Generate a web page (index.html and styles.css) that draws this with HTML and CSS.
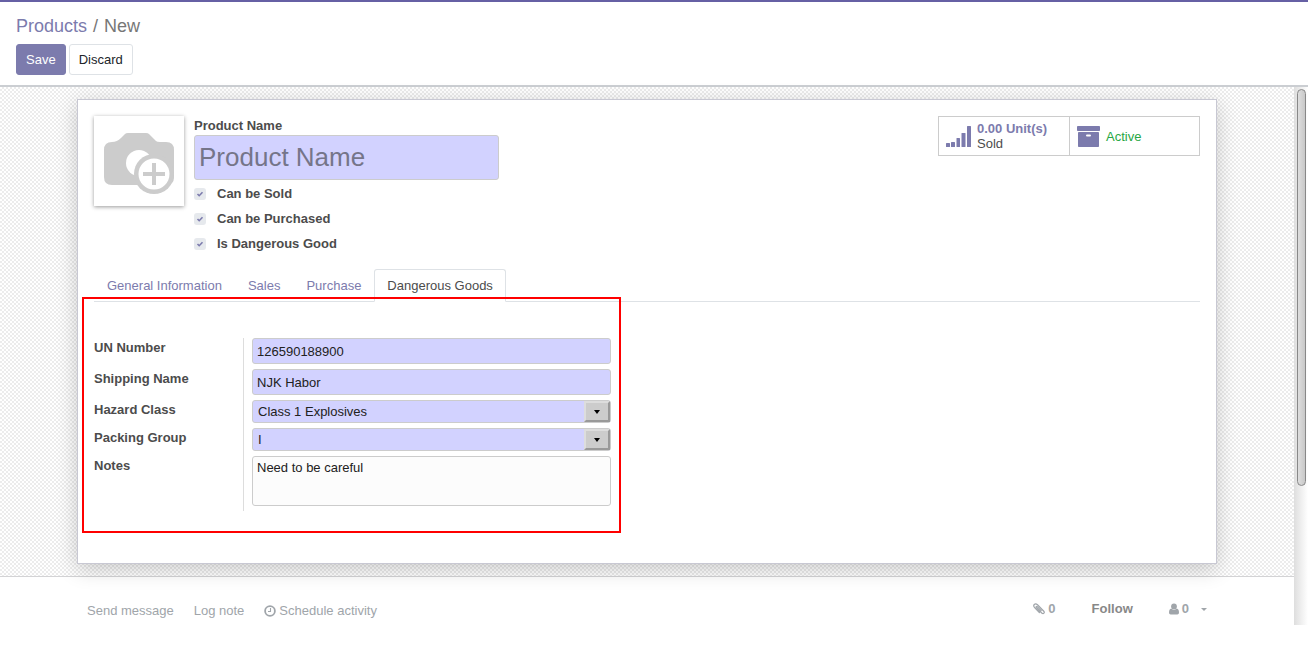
FILE: index.html
```html
<!DOCTYPE html>
<html lang="en">
<head>
<meta charset="utf-8">
<title>Products / New</title>
<link rel="stylesheet" href="styles.css">
</head>
<body>
<header class="control-panel">
  <nav class="breadcrumb" aria-label="Breadcrumb">
    <a href="#">Products</a><span class="muted">/</span><span class="current">New</span>
  </nav>
  <div class="actions">
    <button class="btn btn-primary" type="button">Save</button>
    <button class="btn btn-secondary" type="button">Discard</button>
  </div>
</header>

<div class="content">
  <main class="view">
    <div class="sheet-bg">
      <form class="sheet">
        <div class="sheet-top">
          <button class="avatar" type="button" aria-label="Upload image">
            <svg viewBox="0 0 90 90" width="90" height="90">
              <path fill="#ccc" d="M18 26q5 0 9-4l4-4q1-1 3-1h18q2 0 3 1l7 7q1 1 4 1h6q8 0 8 8v27q0 8-8 8H18q-8 0-8-8V34q0-8 8-8z"/>
              <circle cx="45" cy="47" r="13" fill="#fff"/>
              <circle cx="60" cy="58" r="20" fill="#ccc"/>
              <circle cx="60" cy="58" r="15.5" fill="#fff"/>
              <path d="M49 58h22M60 47v22" stroke="#ccc" stroke-width="4"/>
            </svg>
          </button>
          <div class="title-block">
            <label class="field-label" for="name">Product Name</label>
            <input class="name-input" id="name" type="text" placeholder="Product Name">
            <div class="checks">
              <label class="check"><input type="checkbox" checked>Can be Sold</label>
              <label class="check"><input type="checkbox" checked>Can be Purchased</label>
              <label class="check"><input type="checkbox" checked>Is Dangerous Good</label>
            </div>
          </div>
          <div class="stats">
            <button class="stat" type="button">
              <svg viewBox="0 0 25 21" width="25" height="21" fill="#7c7bad">
                <rect x="0" y="17" width="4" height="4" rx=".5"/><rect x="5" y="16" width="4" height="5" rx=".5"/><rect x="10.500" y="12" width="3.500" height="9" rx=".5"/><rect x="15.500" y="7" width="4" height="14" rx=".5"/><rect x="21" y="0" width="4" height="21" rx=".5"/>
              </svg>
              <span><strong>0.00 Unit(s)</strong><br>Sold</span>
            </button>
            <button class="stat" type="button">
              <svg viewBox="0 0 23 21" width="23" height="21">
                <rect width="23" height="5" rx=".8" fill="#7c7bad"/><rect x="1" y="6" width="21" height="15" rx=".8" fill="#7c7bad"/><rect x="9" y="8.500" width="5" height="2" rx="1" fill="#fff"/>
              </svg>
              <span class="active-text">Active</span>
            </button>
          </div>
        </div>

        <nav class="tabs" aria-label="Product sections">
          <a class="tab" href="#">General Information</a>
          <a class="tab" href="#">Sales</a>
          <a class="tab" href="#">Purchase</a>
          <a class="tab tab-active" href="#">Dangerous Goods</a>
        </nav>

        <div class="panel">
          <div class="group">
            <div class="highlight"></div>
            <div class="rows">
              <label class="field-label" for="un">UN Number</label>
              <div class="cell"><input class="field" id="un" type="text" value="126590188900"></div>
              <label class="field-label" for="ship">Shipping Name</label>
              <div class="cell"><input class="field" id="ship" type="text" value="NJK Habor"></div>
              <label class="field-label" for="hazard">Hazard Class</label>
              <div class="cell"><div class="select-box"><select id="hazard"><option>Class 1 Explosives</option></select><span class="arrow"></span></div></div>
              <label class="field-label" for="packing">Packing Group</label>
              <div class="cell"><div class="select-box"><select id="packing"><option>I</option></select><span class="arrow"></span></div></div>
              <label class="field-label" for="notes">Notes</label>
              <div class="cell"><textarea class="notes" id="notes">Need to be careful</textarea></div>
            </div>
          </div>
        </div>
      </form>
    </div>

    <footer class="chatter">
      <div class="chatter-inner">
        <div class="chatter-left">
          <button class="link" type="button">Send message</button>
          <button class="link" type="button">Log note</button>
          <button class="link" type="button">
            <svg viewBox="0 0 12 12" width="12" height="12" fill="none" stroke="currentColor"><circle cx="6" cy="6" r="4.900" stroke-width="1.800"/><path d="M6.500 3v3.500H4" stroke-width="1.100"/></svg>
            Schedule activity
          </button>
        </div>
        <div class="chatter-right">
          <button class="link bold" type="button">
            <svg viewBox="0 0 12 12" width="12" height="12" fill="none" stroke="currentColor" stroke-width="1.200" stroke-linecap="round"><path d="M8.200 7.600 4.300 3.600Q3.600 3 3.200 3.500 2.800 4 3.400 4.600L8.700 10Q10 11.100 10.900 10.200 11.800 9.300 10.600 8L4.500 1.800Q2.700 .1 1.300 1.500 0 2.900 1.600 4.600L6.400 9.500"/></svg>
            0
          </button>
          <button class="link bold follow" type="button">Follow</button>
          <button class="link bold" type="button">
            <svg viewBox="0 0 10 12" width="10" height="12" fill="currentColor"><circle cx="5" cy="3.400" r="2.900"/><path d="M2.300 5.500Q5 8 7.700 5.500 10 6 10 9.800 10 11.500 8.300 11.500H1.700Q0 11.500 0 9.800 0 6 2.300 5.500z"/></svg>
            0<span class="caret"></span>
          </button>
        </div>
      </div>
    </footer>
  </main>
  <div class="scroll-track"><div class="scroll-thumb"></div></div>
</div>
</body>
</html>
```
FILE: styles.css
```css
* { box-sizing: border-box; }

body {
  margin: 0;
  padding-right: 2px;
  background: #fff;
  color: #4c4c4c;
  font: 13px/20px "Liberation Sans", Arial, sans-serif;
}

button, input, select, textarea { font: inherit; margin: 0; }
button { cursor: pointer; }
a { color: #7c7bad; text-decoration: none; }
svg { display: block; flex: none; }

.control-panel {
  display: flex;
  flex-direction: column;
  gap: 6px;
  padding: 12px 16px 10px;
  border-top: 2px solid #6660a4;
  border-bottom: 2px solid #cbced2;
}
.breadcrumb { display: flex; gap: 6px; font-size: 18px; line-height: 24px; }
.muted, .current { color: #777; }
.actions { display: flex; gap: 3px; }
.btn { height: 31px; padding: 0 9px; border: 1px solid #7c7bad; border-radius: 3px; }
.btn-primary { background: #7c7bad; color: #fff; }
.btn-secondary { background: #fff; border-color: #dee2e6; color: #212529; }

.content { display: flex; }
.view { flex: 1; min-width: 0; }

.sheet-bg {
  padding: 12px 16px;
  border-bottom: 1px solid #d3d3d5;
  background: repeating-conic-gradient(#ececec 0 25%, #fff 0 50%) 0 0 / 4px 4px;
}
.sheet {
  max-width: 1140px;
  margin: 0 auto;
  padding: 16px 16px 30px;
  border: 1px solid #c8c8d3;
  background: #fff;
  box-shadow: 0 5px 20px rgba(0, 0, 0, 0.2);
}

.sheet-top { display: flex; align-items: flex-start; }
.avatar {
  flex: none;
  width: 90px;
  height: 90px;
  margin-right: 10px;
  padding: 0;
  border: 0;
  background: #fff;
  box-shadow: 0 1px 4px rgba(0, 0, 0, 0.4);
}
.title-block { width: 305px; }
.field-label { font-weight: bold; }
.title-block > .field-label { display: block; line-height: 19px; }
.name-input {
  display: block;
  width: 100%;
  height: 45px;
  padding: 0 4px;
  border: 1px solid #ccc;
  border-radius: 3px;
  background: #d2d2ff;
  color: #4c4c4c;
  font-size: 26px;
}
.name-input::placeholder { color: #757589; opacity: 1; }
.checks { display: grid; gap: 5px; padding-top: 4px; }
.check { display: flex; align-items: center; gap: 11px; font-weight: bold; }
.check input {
  appearance: none;
  width: 12px;
  height: 12px;
  border-radius: 3px;
  background: #e6e9ed url("data:image/svg+xml,%3Csvg xmlns='http://www.w3.org/2000/svg' viewBox='0 0 12 12'%3E%3Cpath d='M3.500 6l1.700 1.700L8.500 4.300' fill='none' stroke='%237c7bad' stroke-width='1.600'/%3E%3C/svg%3E");
}

.stats { display: flex; margin-left: auto; border: 1px solid #ccc; }
.stat {
  display: flex;
  align-items: center;
  gap: 6px;
  width: 130px;
  height: 38px;
  padding: 0 7px;
  border: 0;
  background: #fff;
  color: #4c4c4c;
  line-height: 15px;
  text-align: left;
}
.stat + .stat { border-left: 1px solid #ccc; }
.stat strong { color: #7c7bad; }
.active-text { color: #28a745; }

.tabs { display: flex; margin-top: 15px; border-bottom: 1px solid #dee2e6; }
.tab { margin-bottom: -1px; padding: 6px 12px 5px; border: 1px solid transparent; border-radius: 3px 3px 0 0; }
.tab-active { border-color: #dee2e6; border-bottom-color: #fff; background: #fff; color: #4c4c4c; }

.panel { display: grid; grid-template-columns: 1fr 1fr; gap: 72px; }
.group { position: relative; padding: 36px 0 22px; }
.highlight { position: absolute; inset: -5px -10px 0 -12px; border: 2px solid #f00; pointer-events: none; }
.rows { display: grid; grid-template-columns: 149px 1fr; }
.cell { padding: 0 0 5px 8px; border-left: 1px solid #ddd; }
.field, .notes, .select-box {
  display: block;
  width: 100%;
  border: 1px solid #ccc;
  border-radius: 3px;
  background: #d2d2ff;
  color: #212121;
}
.field { height: 26px; padding: 0 4px; }
.select-box { position: relative; height: 23px; }
.select-box select {
  appearance: none;
  display: block;
  width: 100%;
  height: 21px;
  padding: 0 28px 0 5px;
  border: 0;
  background: transparent;
  color: inherit;
}
.arrow {
  position: absolute;
  inset: 0 0 0 auto;
  width: 26px;
  border: 2px solid;
  border-color: #ddd #999 #999 #ddd;
  background: #ccc;
  pointer-events: none;
}
.arrow::after {
  content: "";
  display: block;
  width: 0;
  margin: 7px auto 0;
  border: 3px solid transparent;
  border-top: 4px solid #000;
  border-bottom: 0;
}
.notes { height: 50px; padding: 1px 4px; background: #fcfcfc; resize: none; }

.chatter { padding: 22px 16px 4px; }
.chatter-inner {
  display: flex;
  justify-content: space-between;
  align-items: flex-start;
  max-width: 1140px;
  margin: 0 auto;
  padding: 0 10px;
}
.chatter-left { display: flex; gap: 20px; padding-top: 2px; }
.chatter-right { display: flex; gap: 36px; }
.link { display: flex; align-items: center; gap: 3px; padding: 0; border: 0; background: none; color: #a0a5aa; line-height: 20px; }
.bold { font-weight: bold; }
.follow { color: #888; }
.caret { margin-left: 9px; border: 3px solid transparent; border-top-color: currentColor; border-bottom: 0; }

.scroll-track { width: 14px; padding: 2px 2px 0 3px; background: linear-gradient(90deg, #dedede, #fff); }
.scroll-thumb {
  height: 74%;
  border: 1px solid #888;
  border-radius: 5px;
  background: linear-gradient(90deg, #dedede, #c8c8c8);
}
```
